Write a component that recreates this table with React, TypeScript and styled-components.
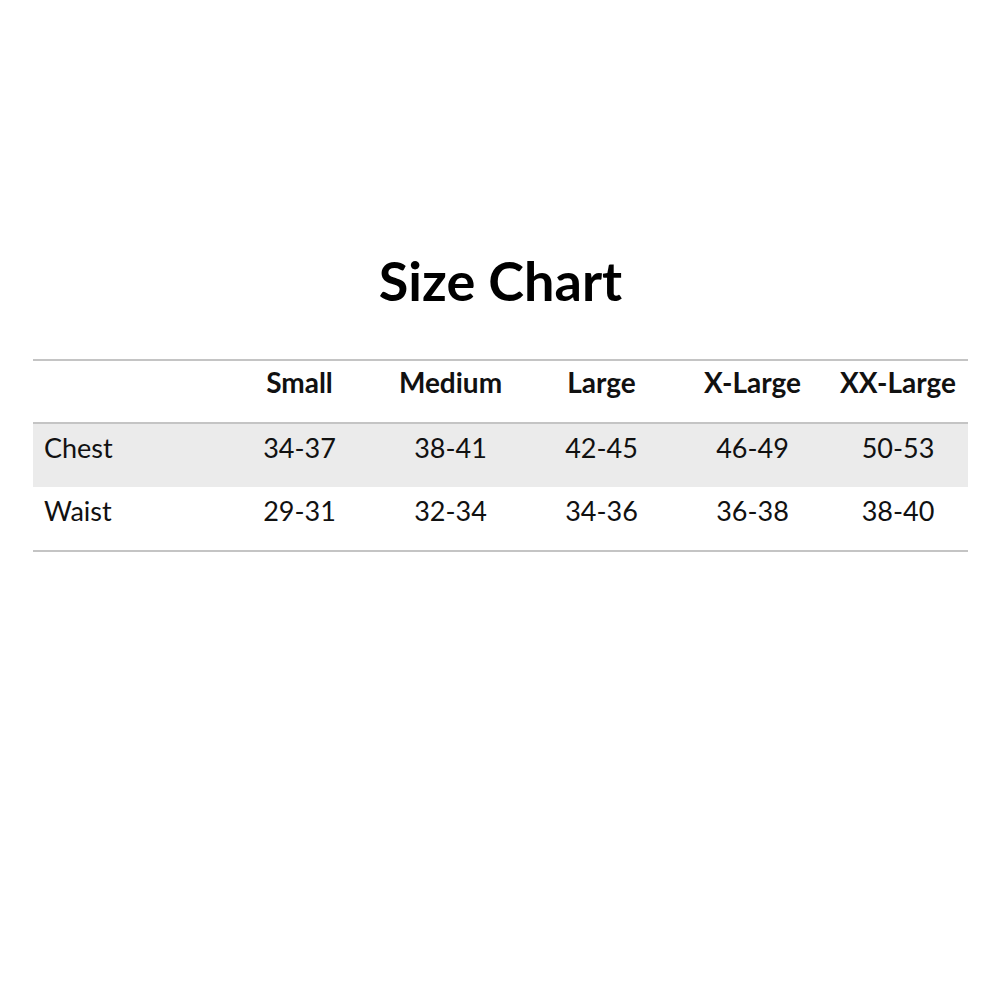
import styled, { createGlobalStyle } from "styled-components";

const GlobalStyle = createGlobalStyle`
  html, body {
    margin: 0;
    padding: 0;
    background: #ffffff;
  }
  body {
    font-family: Lato, "Open Sans", sans-serif;
    color: #111111;
  }
`;

const Page = styled.div`
  width: 1000px;
  height: 1000px;
  box-sizing: border-box;
  padding: 249px 32px 0 33px;
  display: flex;
  flex-direction: column;
  align-items: stretch;
`;

const Title = styled.h1`
  margin: 0;
  text-align: center;
  font-size: 54px;
  font-weight: 700;
  line-height: 64px;
  color: #000000;
`;

const Table = styled.div`
  margin-top: 46px;
  border-top: 2px solid #c4c4c4;
  border-bottom: 2px solid #c4c4c4;
`;

const Row = styled.div<{ $shaded?: boolean; $head?: boolean }>`
  display: grid;
  grid-template-columns: 191px 151px 151px 151px 151px 1fr;
  align-items: center;
  box-sizing: border-box;
  height: ${(p) => (p.$head ? "63px" : "63px")};
  padding-bottom: ${(p) => (p.$head ? "19px" : "17px")};
  background: ${(p) => (p.$shaded ? "#ebebeb" : "transparent")};
  border-bottom: ${(p) => (p.$head ? "2px solid #c4c4c4" : "none")};
  font-size: ${(p) => (p.$head ? "28px" : "27px")};
  font-weight: ${(p) => (p.$head ? 700 : 400)};
`;

const Label = styled.div`
  padding-left: 11px;
`;

const Cell = styled.div`
  text-align: center;
`;

const sizes = ["Small", "Medium", "Large", "X-Large", "XX-Large"];
const rows = [
  { label: "Chest", values: ["34-37", "38-41", "42-45", "46-49", "50-53"] },
  { label: "Waist", values: ["29-31", "32-34", "34-36", "36-38", "38-40"] },
];

const App = () => {
  return (
    <>
      <GlobalStyle />
      <Page>
        <Title>Size Chart</Title>
        <Table>
          <Row $head>
            <Label />
            {sizes.map((s) => (
              <Cell key={s}>{s}</Cell>
            ))}
          </Row>
          {rows.map((r, i) => (
            <Row key={r.label} $shaded={i === 0}>
              <Label>{r.label}</Label>
              {r.values.map((v) => (
                <Cell key={v}>{v}</Cell>
              ))}
            </Row>
          ))}
        </Table>
      </Page>
    </>
  );
};

export default App;
